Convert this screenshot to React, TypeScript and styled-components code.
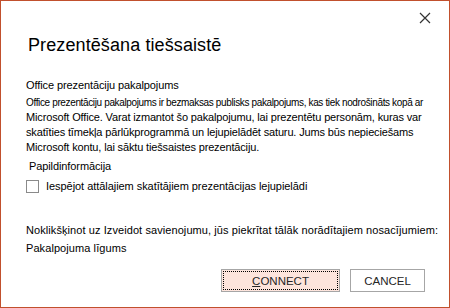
import React from "react";
import styled, { createGlobalStyle } from "styled-components";

const Global = createGlobalStyle`
  html, body { margin: 0; padding: 0; background: #ffffff; }
  body { font-family: "Liberation Sans", Arial, sans-serif; color: #000; }
`;

const Dialog = styled.div`
  position: relative;
  box-sizing: border-box;
  width: 450px;
  height: 308px;
  border: 1px solid #c1502d;
  background: #fff;
  display: flex;
  flex-direction: column;
  padding: 0 0 0 25px;
`;

const CloseButton = styled.button`
  position: absolute;
  top: 8px;
  right: 15px;
  width: 18px;
  height: 18px;
  padding: 0;
  border: none;
  background: transparent;
  display: flex;
  align-items: center;
  justify-content: center;
`;

const Title = styled.h1`
  margin: 32px 0 0 2px;
  font-size: 18px;
  line-height: 24px;
  font-weight: 400;
  letter-spacing: 0.1px;
`;

const SectionHeading = styled.div<{ $indent?: number; $gap: number }>`
  margin: ${(p) => p.$gap}px 0 0 ${(p) => p.$indent ?? 0}px;
  font-size: 11px;
  letter-spacing: -0.1px;
  line-height: 16px;
`;

const Paragraph = styled.div`
  margin-top: 2px;
  line-height: 15px;
`;

const Line = styled.div<{ $small?: boolean }>`
  font-size: ${(p) => (p.$small ? "10px" : "11px")};
  letter-spacing: ${(p) => (p.$small ? "-0.36px" : "-0.15px")};
  white-space: nowrap;
`;

const CheckRow = styled.label`
  display: flex;
  align-items: center;
  gap: 7px;
  margin-top: 4px;
  font-size: 11px;
  letter-spacing: -0.05px;
  line-height: 16px;
`;

const CheckBox = styled.span`
  box-sizing: border-box;
  width: 13px;
  height: 13px;
  border: 1px solid #8a8a8a;
  background: #fff;
`;

const Terms = styled.div`
  margin-top: 27px;
  font-size: 11px;
  letter-spacing: 0.08px;
  line-height: 18px;
  white-space: nowrap;
`;

const Footer = styled.div`
  margin-top: auto;
  display: flex;
  justify-content: flex-end;
  gap: 10px;
  padding: 0 24px 15px 0;
`;

const Button = styled.button<{ $primary?: boolean; $w: number }>`
  position: relative;
  box-sizing: border-box;
  width: ${(p) => p.$w}px;
  height: 23px;
  border: 1px solid #a6a6a6;
  background: ${(p) => (p.$primary ? "#fde4dc" : "#ffffff")};
  font-family: "Liberation Sans", Arial, sans-serif;
  font-size: 11.5px;
  color: #262626;
  padding: 0;
  ${(p) =>
    p.$primary
      ? `&::after {
    content: "";
    position: absolute;
    inset: 1px;
    border: 1px dotted #000;
  }`
      : ""}
`;

const Access = styled.span`
  text-decoration: underline;
`;

export default function App() {
  return (
    <>
      <Global />
      <Dialog>
        <CloseButton aria-label="Close">
          <svg width="12" height="12" viewBox="0 0 12 12">
            <path d="M1 1 L11 11 M11 1 L1 11" stroke="#333" strokeWidth="1.2" />
          </svg>
        </CloseButton>
        <Title>Prezentēšana tiešsaistē</Title>
        <SectionHeading $gap={20}>Office prezentāciju pakalpojums</SectionHeading>
        <Paragraph>
          <Line $small>
            Office prezentāciju pakalpojums ir bezmaksas publisks pakalpojums, kas tiek nodrošināts kopā ar
          </Line>
          <Line>Microsoft Office. Varat izmantot šo pakalpojumu, lai prezentētu personām, kuras var</Line>
          <Line>skatīties tīmekļa pārlūkprogrammā un lejupielādēt saturu. Jums būs nepieciešams</Line>
          <Line>Microsoft kontu, lai sāktu tiešsaistes prezentāciju.</Line>
        </Paragraph>
        <SectionHeading $gap={3} $indent={3}>Papildinformācija</SectionHeading>
        <CheckRow>
          <CheckBox />
          Iespējot attālajiem skatītājiem prezentācijas lejupielādi
        </CheckRow>
        <Terms>
          Noklikšķinot uz Izveidot savienojumu, jūs piekrītat tālāk norādītajiem nosacījumiem:
          <br />
          Pakalpojuma līgums
        </Terms>
        <Footer>
          <Button $primary $w={119}>
            <Access>C</Access>ONNECT
          </Button>
          <Button $w={75}>CANCEL</Button>
        </Footer>
      </Dialog>
    </>
  );
}
